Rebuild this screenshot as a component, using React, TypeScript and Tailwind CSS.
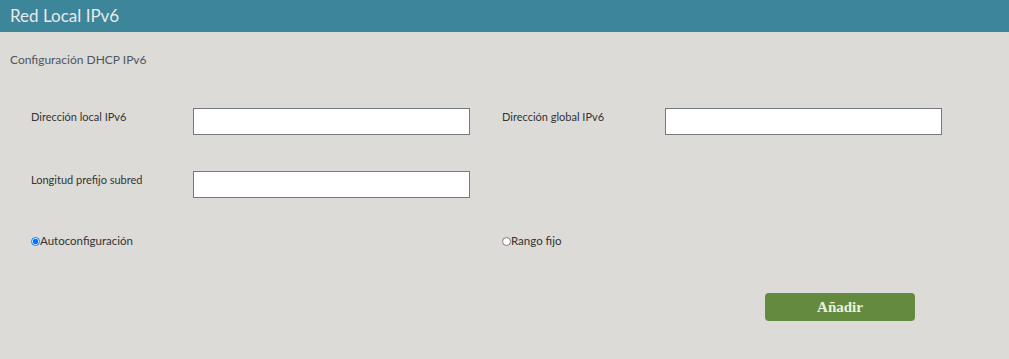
import React from "react";

const font = { fontFamily: "Lato, 'Open Sans', sans-serif" };

function Field({ label, labelW }: { label: string; labelW: string }) {
  return (
    <div className="flex w-[471px]">
      <div className={`${labelW} pt-[1px] text-[11px] leading-[16px] text-[#333]`}>{label}</div>
      <input type="text" className="w-[277px] h-[27px] border border-[#76797b] bg-white outline-none" />
    </div>
  );
}

export default function App() {
  return (
    <div className="w-[1009px] h-[359px] bg-[#dcdbd7] font-['Lato',sans-serif]" style={font}>
      <div className="h-[32px] bg-[#3d8599] flex items-center px-[10px] text-[17px] text-[#e8eaea]">
        Red Local IPv6
      </div>
      <div className="pt-[20px] pl-[10px] text-[12px] leading-[16px] text-[#4f5660]">
        Configuración DHCP IPv6
      </div>
      <div className="mt-[40px] flex pl-[31px]">
        <Field label="Dirección local IPv6" labelW="w-[162px]" />
        <Field label="Dirección global IPv6" labelW="w-[163px]" />
      </div>
      <div className="mt-[36px] flex pl-[31px]">
        <Field label="Longitud prefijo subred" labelW="w-[162px]" />
      </div>
      <div className="mt-[35px] flex pl-[31px] h-[16px] items-center text-[11.5px] text-[#333]">
        <label className="w-[471px] flex items-center">
          <input type="radio" name="mode" defaultChecked className="w-[9px] h-[9px] m-0" />
          <span>Autoconfiguración</span>
        </label>
        <label className="flex items-center">
          <input type="radio" name="mode" className="w-[9px] h-[9px] m-0" />
          <span>Rango fijo</span>
        </label>
      </div>
      <div className="mt-[44px] ml-[765px]">
        <button
          className="w-[150px] h-[28px] rounded-[4px] bg-[#648b3d] text-[#eef0e4] text-[15px] font-bold"
          style={{ fontFamily: "'Liberation Serif', serif" }}
        >
          Añadir
        </button>
      </div>
    </div>
  );
}
